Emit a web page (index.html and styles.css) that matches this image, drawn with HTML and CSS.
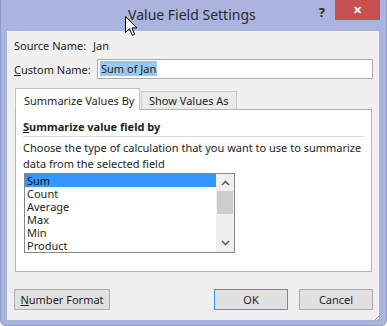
FILE: index.html
```html
<!DOCTYPE html>
<html>
<head>
	<meta charset="UTF-8">
	<title>Value Field Settings</title>
	<link rel="stylesheet" href="styles.css">
</head>
<body>
<div class="window">
	<div class="titlebar">
		<span class="title">Value Field Settings</span>
		<span class="help">?</span>
		<span class="close">&#x2715;</span>
	</div>
	<div class="client">
		<div class="row source">
			<span class="lbl">Source Name:</span>
			<span>Jan</span>
		</div>
		<div class="row custom">
			<span class="lbl"><u>C</u>ustom Name:</span>
			<div class="input"><span class="sel">Sum of Jan</span></div>
		</div>
		<div class="tabs">
			<div class="tab active">Summarize Values By</div>
			<div class="tab">Show Values As</div>
		</div>
		<div class="panel">
			<div class="heading"><u>S</u>ummarize value field by</div>
			<div class="sep"></div>
			<p class="desc">Choose the type of calculation that you want to use to summarize<br>data from the selected field</p>
			<div class="listbox">
				<ul class="items">
					<li class="on">Sum</li>
					<li>Count</li>
					<li>Average</li>
					<li>Max</li>
					<li>Min</li>
					<li>Product</li>
				</ul>
				<div class="scroll">
					<svg class="arrow" width="9" height="6" viewBox="0 0 9 6"><path d="M1 5 L4.5 1.5 L8 5" fill="none" stroke="#606060" stroke-width="1.6"/></svg>
					<div class="thumb"></div>
					<svg class="arrow down" width="9" height="6" viewBox="0 0 9 6"><path d="M1 1 L4.5 4.5 L8 1" fill="none" stroke="#606060" stroke-width="1.6"/></svg>
				</div>
			</div>
		</div>
		<div class="buttons">
			<button class="btn numfmt"><u>N</u>umber Format</button>
			<span class="spacer"></span>
			<button class="btn ok">OK</button>
			<button class="btn">Cancel</button>
		</div>
	</div>
	<svg class="grip" width="10" height="10" viewBox="0 0 10 10"><path d="M9 1 L1 9 M9 4 L4 9 M9 7 L7 9" stroke="#a0a0a0" stroke-width="1"/></svg>
	<svg class="cursor" width="13" height="21" viewBox="0 0 13 21"><path d="M0.5 0.5 L0.5 16.5 L4.5 12.7 L7.3 19.3 L9.6 18.3 L6.9 11.9 L12 11.9 Z" fill="#fff" stroke="#000" stroke-width="1"/></svg>
</div>
</body>
</html>
```

FILE: styles.css
```css
*{
	box-sizing: border-box;
}
body{
	margin: 0;
	font-family: "Segoe UI", "Noto Sans", sans-serif;
	font-size: 11px;
	color: #1e1e1e;
}
.window{
	position: relative;
	width: 387px;
	height: 326px;
	background-color: #aab4de;
	border: 1px solid #8f9bc8;
	border-top: none;
	border-radius: 0 0 6px 6px;
	padding: 0 7px 5px 6px;
	display: flex;
	flex-direction: column;
}
.titlebar{
	height: 31px;
	display: flex;
	align-items: flex-start;
	position: relative;
}
.title{
	flex: 1;
	text-align: center;
	font-size: 14px;
	color: #2a2a2a;
	padding-top: 5px;
	padding-left: 58px;
}
.help{
	font-weight: bold;
	font-size: 13px;
	color: #2a2a2a;
	padding-top: 3px;
	margin-right: 10px;
}
.close{
	width: 45px;
	height: 20px;
	background-color: #c75050;
	color: #fff;
	font-size: 11px;
	font-weight: bold;
	text-align: center;
	line-height: 20px;
	margin-right: -1px;
}
.client{
	flex: 1;
	background-color: #f0f0f0;
	padding: 0 6px 0 7px;
	display: flex;
	flex-direction: column;
}
.row{
	display: flex;
	align-items: center;
	white-space: nowrap;
}
.source{
	height: 28px;
	padding-top: 1px;
}
.source .lbl{
	width: 79px;
}
.custom{
	height: 20px;
}
.custom .lbl{
	width: 83px;
	flex-shrink: 0;
}
.input{
	flex: 1;
	height: 20px;
	background: #fff;
	border: 1px solid #abadb3;
	padding: 1px 2px;
	line-height: 16px;
}
.sel{
	background-color: #99c9ef;
	padding: 0 1px;
}
.tabs{
	display: flex;
	align-items: flex-end;
	margin-top: 9px;
	margin-left: 1px;
	height: 21px;
	white-space: nowrap;
}
.tab{
	height: 18px;
	padding: 0 7px;
	border: 1px solid #c9c9c9;
	border-bottom: none;
	background-color: #eaeaea;
	line-height: 17px;
	flex-shrink: 0;
}
.tab.active{
	height: 22px;
	width: 125px;
	background: #fff;
	padding: 3px 7px 0 8px;
	margin-right: 1px;
	position: relative;
	top: 1px;
	border-color: #c1c1c1;
}
.panel{
	margin-left: 1px;
	margin-right: 1px;
	height: 163px;
	background: #fff;
	border: 1px solid #b4b4b4;
	padding: 8px 7px 0 7px;
}
.heading{
	font-weight: bold;
	height: 17px;
	line-height: 17px;
}
.sep{
	height: 1px;
	background-color: #dcdcdc;
	margin: 1px 0 3px;
}
.desc{
	margin: 0;
	line-height: 16px;
	height: 33px;
	white-space: nowrap;
}
.listbox{
	margin-left: 1px;
	width: 211px;
	height: 80px;
	border: 1px solid #828790;
	display: flex;
}
.items{
	list-style: none;
	margin: 0;
	padding: 0;
	flex: 1;
}
.items li{
	height: 13px;
	line-height: 13px;
	padding-left: 2px;
}
.items li.on{
	background-color: #3399ff;
	color: #111;
}
.scroll{
	width: 18px;
	background-color: #f0f0f0;
	display: flex;
	flex-direction: column;
	align-items: center;
}
.arrow{
	margin: 6px 0 5px;
}
.arrow.down{
	margin: 0 0 6px;
}
.thumb{
	width: 16px;
	height: 23px;
	background-color: #cdcdcd;
	margin-bottom: auto;
}
.buttons{
	display: flex;
	margin-top: 17px;
	gap: 11px;
}
.spacer{
	flex: 1;
}
.btn{
	font-family: inherit;
	font-size: 11px;
	color: #1e1e1e;
	height: 21px;
	width: 74px;
	background-color: #e1e1e1;
	border: 1px solid #adadad;
	padding: 0;
}
.btn.numfmt{
	width: 96px;
}
.btn.ok{
	border-color: #3399ff;
}
.grip{
	position: absolute;
	right: 3px;
	bottom: 3px;
}
.cursor{
	position: absolute;
	left: 124px;
	top: 16px;
}
```
